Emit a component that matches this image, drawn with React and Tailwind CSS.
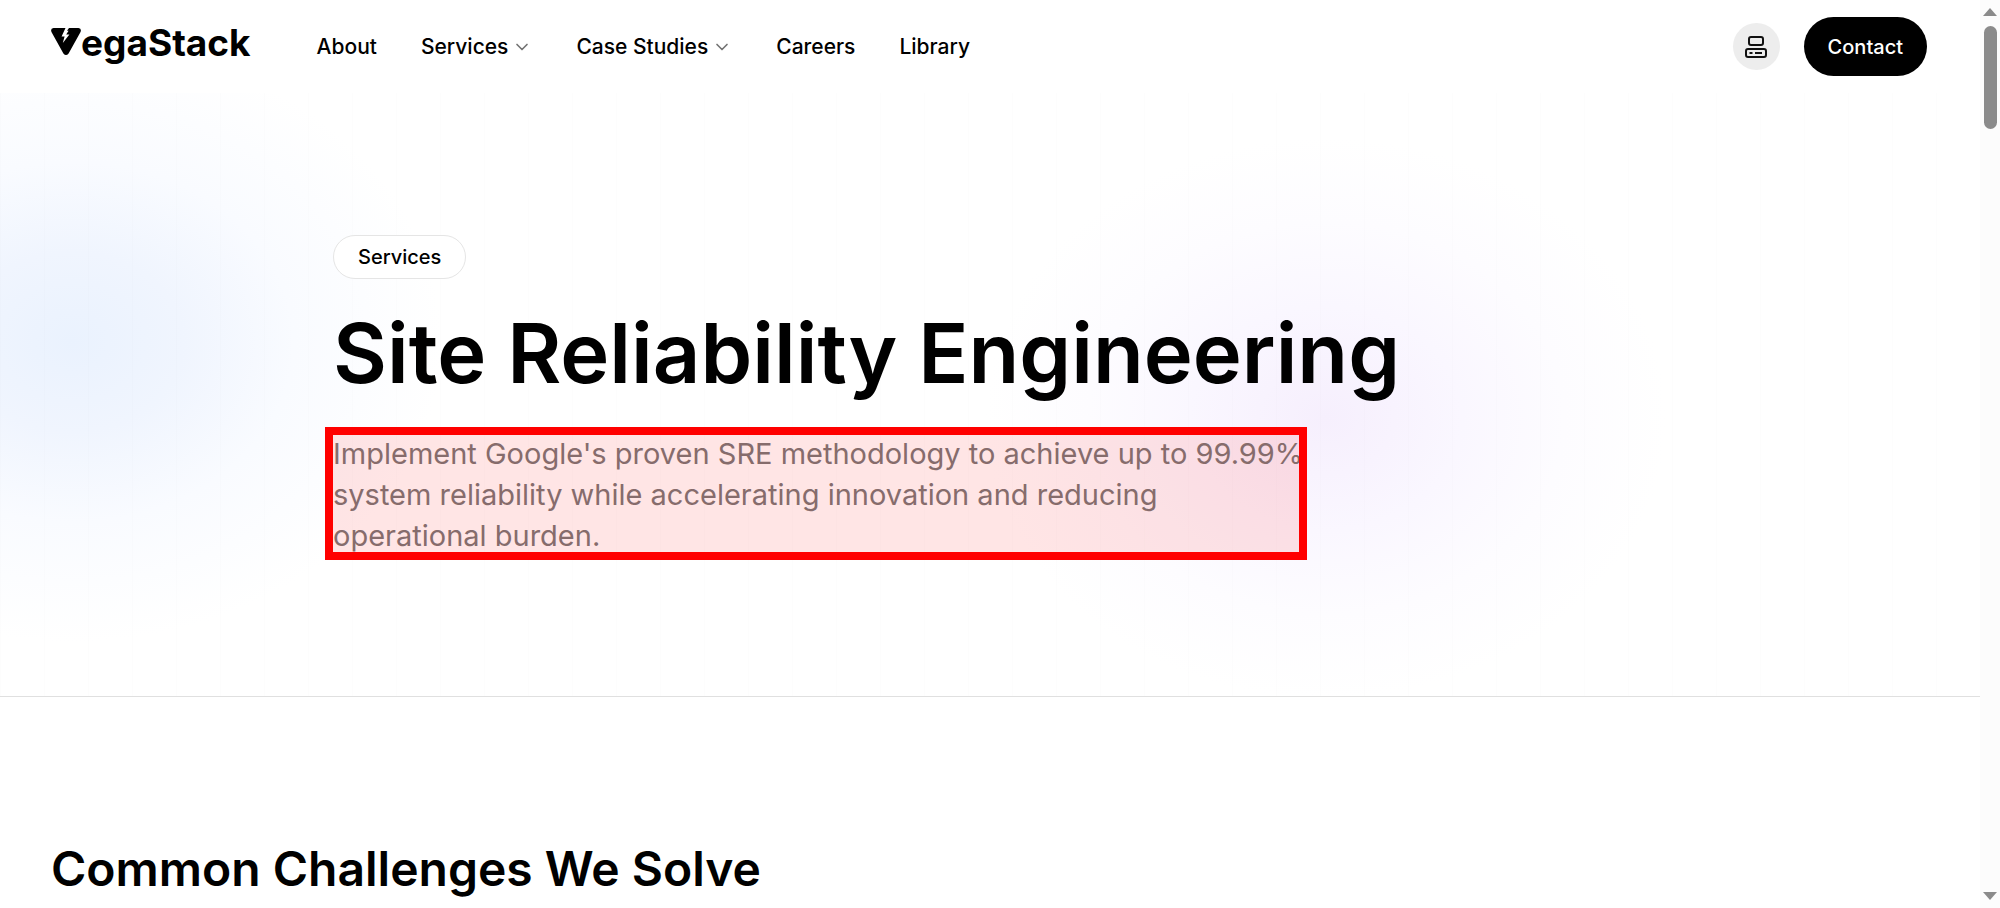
import { ChevronDown } from "lucide-react";

const navItems = [
  { label: "About" },
  { label: "Services", menu: true },
  { label: "Case Studies", menu: true },
  { label: "Careers" },
  { label: "Library" },
];

function Logo() {
  return (
    <a href="#home" className="flex items-baseline pb-2" aria-label="VegaStack">
      <svg viewBox="0 0 30 28" className="h-7 w-[30px]" aria-hidden="true">
        <path
          d="M2.5 0 H14.5 L10.6 8.4 H13.6 L11.8 15 L18.4 6.6 H15.2 L17.6 2.8 H16 L18 0 H27.5 Q31 0.6 29.4 4.2 L17.6 25.4 Q15 28.4 12.4 25.4 L0.6 4.2 Q-1 0.6 2.5 0 Z"
          fill="#000"
        />
      </svg>
      <span className="text-[37px] leading-10 font-bold">egaStack</span>
    </a>
  );
}

function Header() {
  return (
    <header className="flex h-[93px] items-center bg-white pr-[53px] pl-[51px]">
      <Logo />
      <nav className="ml-[66px] flex items-center gap-11 text-[21px] font-medium">
        {navItems.map((item) =>
          item.menu ? (
            <button key={item.label} type="button" className="flex items-center gap-1">
              {item.label}
              <ChevronDown className="size-5 text-neutral-500" strokeWidth={2} />
            </button>
          ) : (
            <a key={item.label} href="#page">
              {item.label}
            </a>
          ),
        )}
      </nav>
      <div className="ml-auto flex items-center gap-6">
        <button
          type="button"
          aria-label="Theme"
          className="flex size-[47px] items-center justify-center rounded-full bg-[#ededed]"
        >
          <svg viewBox="0 0 24 24" className="size-6" fill="none" stroke="#111" strokeWidth="2">
            <rect x="5" y="2" width="14" height="8" rx="2" />
            <rect x="2" y="14" width="20" height="8" rx="2" />
            <path d="M5.5 18h3M11 18h7" />
          </svg>
        </button>
        <a
          href="#contact"
          className="flex h-[59px] items-center rounded-full bg-black px-6 text-xl font-medium text-white"
        >
          Contact
        </a>
      </div>
    </header>
  );
}

function Hero() {
  return (
    <section className="border-b border-[#e0e0e0] bg-[repeating-linear-gradient(90deg,rgba(0,0,0,0.006)_0,rgba(0,0,0,0.006)_1px,transparent_1px,transparent_44px),radial-gradient(ellipse_370px_300px_at_72px_249px,#eaf2fe_0%,#f0f5fe_30%,#f9fbff_60%,#ffffff00_100%),radial-gradient(ellipse_340px_280px_at_1326px_325px,#f6effd_0%,#faf7ff_40%,#fdfcff_70%,#ffffff00_100%)] px-[333px] pt-[142px] pb-[140px]">
      <span className="flex h-11 w-fit items-center rounded-full border border-neutral-200 bg-white px-6 text-xl font-medium">
        Services
      </span>
      <h1 className="mt-[30px] text-[83px] leading-[88px] font-semibold">
        Site Reliability Engineering
      </h1>
      <div className="relative mt-9 max-w-[974px]">
        <p className="text-[29px] leading-[41px] text-[#787878]">
          Implement Google's proven SRE methodology to achieve up to 99.99% system reliability while
          accelerating innovation and reducing operational burden.
        </p>
        <div className="absolute -top-1.5 right-0 -bottom-1 -left-2 border-8 border-[#ff0000] bg-[#ff0000]/10" />
      </div>
    </section>
  );
}

function ScrollBar() {
  return (
    <div className="flex w-5 flex-col items-center bg-[#fcfcfc] py-2" aria-hidden="true">
      <svg viewBox="0 0 14 8" className="h-2 w-3.5">
        <path d="M0 8 7 0l7 8Z" fill="#8b8b8b" />
      </svg>
      <div className="mt-2.5 h-[103px] w-[13px] rounded-full bg-[#8b8b8b]" />
      <svg viewBox="0 0 14 8" className="mt-auto h-2 w-3.5">
        <path d="M0 0h14L7 8Z" fill="#8b8b8b" />
      </svg>
    </div>
  );
}

export default function App() {
  return (
    <div className="flex h-screen overflow-hidden bg-white font-['Inter',sans-serif] text-black">
      <main className="min-w-0 flex-1">
        <Header />
        <Hero />
        <section className="px-[51px] pt-[140px]">
          <h2 className="text-5xl leading-[64px] font-semibold">Common Challenges We Solve</h2>
        </section>
      </main>
      <ScrollBar />
    </div>
  );
}
